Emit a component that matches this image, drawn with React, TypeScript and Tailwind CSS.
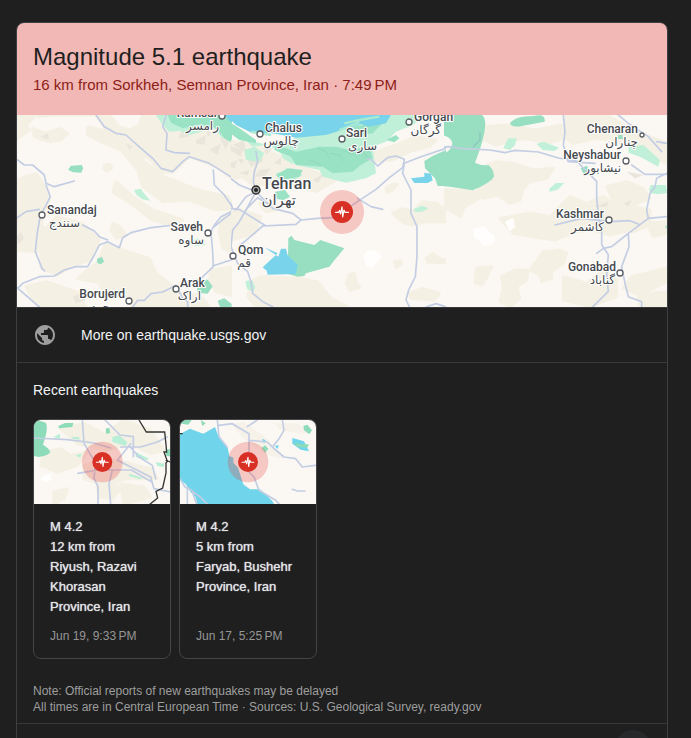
import type { ReactNode } from "react";

type City = {
  name: string;
  local: string;
  x: number;
  y: number;
  localX: number;
  dot: [number, number];
  anchor?: "start" | "end";
  big?: boolean;
};

const cities: City[] = [
  { name: "Ramsar", local: "رامسر", x: 201, y: 2, localX: 202, dot: [205, 1], anchor: "end" },
  { name: "Sanandaj", local: "سنندج", x: 30, y: 99, localX: 63, dot: [25, 100] },
  { name: "Saveh", local: "ساوه", x: 186, y: 116, localX: 187, dot: [191, 118], anchor: "end" },
  { name: "Arak", local: "اراک", x: 163, y: 172, localX: 184, dot: [159, 174] },
  { name: "Borujerd", local: "بروجرد", x: 108, y: 183, localX: 109, dot: [112, 186], anchor: "end" },
  { name: "Chalus", local: "چالوس", x: 248, y: 17, localX: 282, dot: [243, 19] },
  { name: "Sari", local: "ساری", x: 329, y: 22, localX: 360, dot: [325, 24] },
  { name: "Gorgan", local: "گرگان", x: 397, y: 6, localX: 424, dot: [392, 7] },
  { name: "Tehran", local: "تهران", x: 245, y: 74, localX: 279, dot: [239, 75], big: true },
  { name: "Qom", local: "قم", x: 221, y: 139, localX: 234, dot: [216, 141] },
  { name: "Chenaran", local: "چناران", x: 621, y: 18, localX: 621, dot: [625, 20], anchor: "end" },
  { name: "Neyshabur", local: "نیشابور", x: 604, y: 44, localX: 604, dot: [609, 46], anchor: "end" },
  { name: "Kashmar", local: "کاشمر", x: 587, y: 103, localX: 587, dot: [592, 105], anchor: "end" },
  { name: "Gonabad", local: "گناباد", x: 599, y: 156, localX: 598, dot: [603, 158], anchor: "end" },
];

function QuakeMark({ x, y, halo, core }: { x: number; y: number; halo: number; core: number }) {
  return (
    <g transform={`translate(${x} ${y})`}>
      <circle r={halo} fill="#e53935" fillOpacity="0.25" />
      <circle r={core} fill="#d93025" />
      <path
        transform={`scale(${core / 11})`}
        d="M-6.5 .3h3L-2.5-1.5-1.5 2 0-5.2.7 5 2-2 3 .3h3.5"
        fill="none"
        stroke="#fff"
        strokeWidth="1.2"
        strokeLinejoin="round"
        strokeLinecap="round"
      />
    </g>
  );
}

function Roads({ children }: { children: ReactNode }) {
  return (
    <g fill="none" stroke="#c3cde3" strokeWidth="5" strokeLinejoin="round" strokeLinecap="round">
      {children}
    </g>
  );
}

function Terrain({ children }: { children: ReactNode }) {
  return (
    <g fill="#f4f0e4" stroke="#f4f0e4" strokeWidth="9" strokeLinejoin="round">
      {children}
    </g>
  );
}

function WestTiles() {
  return (
    <g transform="translate(-1 -5) scale(.33333)">
      <Terrain>
        <path d="M0 15H60L30 45 40 60 0 90Z" />
        <path d="M68 20L110 15H240L270 60 330 85 360 125 405 150 430 185 470 187 520 140 600 170 660 215V15H420L380 15 370 45 340 60 310 50 280 15H68Z" />
        <path d="M50 55l40 15 40-15 25 15-20 20-35 5-45-15Z" />
        <path d="M215 50l60 15 60 30 50 60 60 45 100 40 90 20 25 35-60 5-80-30-80 5-60-45-15-50-50-60-60-25-40-20Z" />
        <path d="M300 215l50 45 60 40 90 30-20 20-70-20-60-45-60-40Z" />
        <path d="M265 165l15-3 8 12-15 8-10-6Z" />
        <path d="M0 210l60-20 20 30 20 50-20 40-5 60-10 55-65-5Z" />
        <path d="M120 320l80 20 50 50-25 60-60 20-40 25-50-20 0-50-25-20 15-60 25 10Z" />
        <path d="M290 340l25 12 15 25-30 8-15-25Z" />
        <path d="M270 400l80 30 50 15 20 45 60 45 10 56H350l-15-30-60-5-30-40-60-10 60-50Z" />
        <path d="M30 530l60-15 90 30 30 45H70l-30-40Z" />
        <path d="M585 480l75-10V560l-60-15-20-30Z" />
        <path d="M480 550l70 5 30 36H480Z" />
        <path d="M620 320l40-20V430l-40-15-10-50Z" />
      </Terrain>
      <g fill="#eae6dc">
        <path d="M490 70l25-10 5 20-30 5ZM540 90l30-15-5 30-25-5ZM580 120l35-20-10 35ZM610 80l30 10-10 30ZM570 60l20 10-15 10Z" />
        <path d="M0 380l15-15 10 20-20 20ZM170 560l25-10 15 20-30 10ZM75 80l20-10 5 20ZM330 100l20 10-10 10Z" />
      </g>
      <path d="M420 15H660V105L615 80 595 55 520 75 490 62 460 65 440 45Z" fill="#c1f0d9" />
      <path d="M455 15H660V105L625 85 605 60 590 50 545 45 500 55 465 38Z" fill="#99e2c4" />
      <path d="M625 15H660V42L640 32Z" fill="#79d3ea" />
      <g fill="#97dfc0">
        <path d="M165 167l33-2 3 10-5 13-25-1-15-8Z" />
        <path d="M243 447l15-7 6 15-10 8-10-4Z" />
        <path d="M605 572l20-7 23 18-5 8H612Z" />
        <path d="M540 507l35 2 15 20-15 22-30-3Z" />
      </g>
      <path d="M354 240l20-4 15 20 14 16-24-4-18-14ZM545 385l25 20-30 3-25-10Z" fill="#c1f0d9" />
      <Roads>
        <path d="M240 15l25 35 35 20 30 5 45 40 35 30 25 30 35 10 30-30 20-15 60 20 40 25 40 25" />
        <path d="M450 15l-10 35 13 20-3 50 25 8 45 2" />
        <path d="M5 150l20 15 25 0 35 30 5 25 25 10 60-17M90 225l13 35-15 30-15 25-10 60-5 50 20 50 8 8M0 325l30-20 40-7" />
        <path d="M5 535l15-15 50-20 45-2 30-18 35-10 35 0 20-35 15-30 25-10 35 18 10-30 25-15 60-15 70-8 55 0M0 530l70 61M200 345l35 18 15 17 25 10" />
        <path d="M592 180l3 45 30 30 30 45-40 20-20 25-10 20 5 60 2 45-40 38M590 468l60-20M595 350l30-25 35-25M660 350l-8 15v60" />
        <path d="M350 591l15-20 20 0 20-20 35-5 20-10 20-10M490 545l10 20 15 10v16" />
      </Roads>
    </g>
  );
}

function CentralTiles() {
  return (
    <g transform="translate(209 -5) scale(.33333)">
      <Terrain>
        <path d="M0 90L100 110 250 180 330 210 270 245 180 220 80 225 50 200 0 210Z" />
        <path d="M0 310l45-10 60 20-20 50-70 20-15-20Z" />
        <path d="M75 515l30-15 110 5 60 10 40 50 50 26H90l-25-30Z" />
        <path d="M360 520l10-25 15-5 5 25 12 18-30 8Z" />
        <path d="M500 310l30-15 30 10 30-30 40 5 30 20v35l-60 0-40 10-25-5Z" />
        <path d="M505 455l20-3 0 12-15 8ZM600 445l20-15 20 15 20 5v8l-55-2ZM550 550l40-15 50 15-15 20-70-5Z" />
        <path d="M410 140l100-35 60-25 60 10-20 20-60 15-50 25-80 5Z" />
        <path d="M480 235l20-12 15 0-15 16-15 8ZM100 280l40 5 10 15-30 5Z" />
      </Terrain>
      <g fill="#e9e5db">
        <path d="M0 85l20 25 30 10-5 20-35-20ZM20 105l40 20-5-35ZM65 150l45-25 0 30-35 15ZM110 105l30 10-20 20ZM5 165l30-15-10 25ZM100 180l35-5-20 25-30 0ZM145 160l20-20 0 25ZM260 210l35-20-20 30ZM35 145l20 5-10 12ZM40 190l30-10-5 15Z" />
      </g>
      <g fill="#c1f0d9">
        <path d="M0 50L40 75 80 110 170 100 260 60 380 35 500 15H600L560 45 510 65 480 95 440 110 450 190 420 205 360 218 290 200 280 180 210 165 130 105 60 90 0 65Z" />
        <path d="M55 120l30-10 30 20-15 25-40-5ZM165 130l50-10 30 20-10 25-40-5-25-15ZM150 190l50-15 30 20-25 15-45 0Z" />
      </g>
      <g fill="#99e2c4">
        <path d="M0 30L40 55 90 90 90 100 40 90 0 60ZM150 105l60 20 70-15 50 0 40 10 60-10 10 35-35 20-25 20-60 5-30-20-80-5-15-25-50-20ZM150 195l35-20 45 5-10 20-55 10Z" />
        <path d="M380 50l60-10 30 0-30 30-40 5ZM480 90l30-15 10 10-15 12ZM147 245l30-5 15 20-20 10-20-3Z" />
      </g>
      <path d="M0 15H495L480 40 430 50 405 42 300 75 210 83 140 70 80 70 30 45Z" fill="#79d3ea" />
      <path d="M355 40l45-10 60-10M340 60l60-23M75 65l60 10" fill="none" stroke="#a9ead0" strokeWidth="7" />
      <g fill="#97dfc0">
        <path d="M595 153l25-15 40-18V228H635l-8-23-30-30Z" />
        <path d="M187 385l10-8 8 13 60 15 18-15 72 25-25 30-20 25-70 20-5 8-20 2-30-8Z" />
        <path d="M0 570l20 21H0Z" />
      </g>
      <path d="M115 412l42 28 8-24 15 0 5 20 30 28-5 28-85 2-3-12-12-10 45-42Z" fill="#79d3ea" />
      <path d="M555 205l40-5 0-12 20 3 5 20-15 8-40 0Z" fill="#79d3ea" />
      <path d="M563 297l25-10 20 8-20 10-20 2ZM58 513l20-3 10 20-5 15-20-8Z" fill="#c1f0d9" />
      <path d="M412 435l20-17 30 10 5 15-17 15-10 18-20-10Z" fill="#fffefc" />
      <g fill="none" stroke="#90d9bb" strokeWidth="3">
        <path d="M275 115l25 10 10 20M310 130l30 5 15 20M350 120l35 15M250 150l35 15M400 120l30 25" />
      </g>
      <Roads>
        <path d="M0 195l40 30 50 20-30 55-20 35-20 25-5 50 20 50 30 25 10 30 5 35 30 25 30 15" />
        <path d="M90 245l-8-30 3-30 10-30-5-30M90 245l50 50 60 15 25 20-15 13-100 5-40 35-30 25M0 295l40 3 80 50M225 330l50-5 50-2 65-45 60-40 40-35 40-30 5-25-25-10-25 5-30 25-20-20-10 0M395 265l40 25 35 8" />
        <path d="M535 160l50-20 75-25M535 160l-5 30 25 50 0 70 18 40 0 90-5 60-20 40-8 30 10 20M600 591l30-10 30 10M0 245l20 50M0 450l20-10M60 298l35-35 30 18M30 300l30-40 30-15" />
      </Roads>
    </g>
  );
}

function EastTiles() {
  return (
    <g transform="translate(423 -5) scale(.33333)">
      <Terrain>
        <path d="M135 50l60-5 90 15 80-15 20 35-60 20-70-15-90 20-40-20ZM380 15H500L580 60 680 100v60l-60-30-70-30-80-15-70 15-30-20Z" />
        <path d="M140 165l30-10 50 5 60 20 60-5-20 30-50 10-20 20-10 35-30 10-40-25-40 10-20-20 20-30Z" />
        <path d="M15 240l80 0 30 20-50 30-15 30-30-20-25-5ZM180 325l90-15 60 10 60-60 50 20 50-20 30 20 110 20 0 45-50 20-90-10-120 15-90 10-60-10Z" />
        <path d="M270 340l60 0 80 10-15 20-50 20-70-10-30-20ZM310 425l50-5 20 10-10 30-35 25 0 20-30 10-5-20-30-15ZM110 475l45-5-15 32-15 22-20-5ZM185 500l40-20 40 0-5 30-30 20 10 35-30 25-30-15 10-40ZM370 500l70 20 50-40 40 30 0 50-80 30-80-20ZM575 500l105-25v40l-80 40-50-20ZM595 555l85-10V591H600ZM500 230l60-15 50 20 20 30-50 20-60-10Z" />
        <path d="M620 340l60-5v35l-40 10ZM480 350l80-10 10 20-60 15-40-10Z" />
      </Terrain>
      <path d="M560 185l50 10-25 10ZM465 290l40-15-5 15ZM550 280l25-10-10 20Z" fill="#e9e5da" />
      <g fill="#97dfc0">
        <path d="M5 15H125Q136 20 136 45 134 85 105 158 125 168 145 165 162 178 162 200 152 218 98 241L30 230-15 227V135L15 130Q35 120 37 100 33 80 5 75L-5 50Z" />
        <path d="M210 40Q225 18 280 18 318 10 314 35L250 47Q215 55 210 40ZM422 175l18-8 10 15-20 8ZM535 75l12 0 2 12h-15ZM675 350l5-5v12Z" />
      </g>
      <g fill="#c1f0d9">
        <path d="M190 115l15-30 25 0-5 20-15 15ZM290 102l20-7 48 18-15 10-35-3ZM328 236l20-17 25 0-20 20-25 6ZM565 110l45-5 50 45-5 20-55-30-35-12ZM627 240l5-15 45 0 5 25-30 3-20-3Z" />
      </g>
      <path d="M100 355l35-7 15 20 15 10-5 22-25 10-20-20-15-8ZM195 335l25-12 5 30-17 10Z" fill="#fffefc" />
      <Roads>
        <path d="M0 112l30-2 30 5 90 5 45 8 30-7 70 5 60 18 60 10 5 10 50 50 0 50 5 50 10 50 0 40 20 30-5 60 5 50-55 55" />
        <path d="M370 15l5 50-5 40 15 50 80 5M535 15l30 25 60 40 40 45M650 95l30 5M575 165l40 28 65 0M680 190l-30 15-5 25-15 20-10 50 5 25-20 15-40 30-25 20-25 20-25 5-20 15M345 345l80-20 85 10 60-3 25 10M565 370l2 40-22 60 10 50 10 40 40 15v15M625 325l55-5" />
        <path d="M100 110l20-20v-20" stroke="#8fc9c0" />
      </Roads>
    </g>
  );
}

function MainMap() {
  return (
    <svg
      viewBox="0 0 650 192"
      preserveAspectRatio="xMidYMid slice"
      role="img"
      aria-label="Map of the epicenter"
      className="block h-48 w-full bg-[#fbf8f3]"
    >
      <svg width="215" height="192"><WestTiles /></svg>
      <svg x="214" width="215" height="192" viewBox="214 0 215 192"><CentralTiles /></svg>
      <svg x="427" width="223" height="192" viewBox="427 0 223 192"><EastTiles /></svg>
      <g fontFamily="Roboto, 'DejaVu Sans', sans-serif" stroke="#fff" strokeWidth="2" strokeLinejoin="round" paintOrder="stroke" fill="#45484d">
        {cities.map((c) => (
          <g key={c.name}>
            <text x={c.x} y={c.y} fontSize={c.big ? 16 : 12} fontWeight="500" textAnchor={c.anchor ?? "start"}>
              {c.name}
            </text>
            <text x={c.localX} y={c.y + (c.big ? 16 : 13)} fontSize={c.big ? 15 : 12} textAnchor="end">
              {c.local}
            </text>
          </g>
        ))}
      </g>
      {cities.map((c) => (
        <g key={c.name}>
          <circle
            cx={c.dot[0]}
            cy={c.dot[1]}
            r={c.name === "Chenaran" ? 2 : c.big ? 4 : 3}
            fill={c.big ? "#a5a7aa" : "#fff"}
            stroke={c.big ? "#222" : "#5a5d62"}
            strokeWidth="1.3"
          />
          {c.big && <circle cx={c.dot[0]} cy={c.dot[1]} r="2" fill="#222" />}
        </g>
      ))}
      <QuakeMark x={325} y={97} halo={22} core={11} />
    </svg>
  );
}

function RazaviMap() {
  return (
    <svg viewBox="30 24 408 252" preserveAspectRatio="xMidYMid slice" role="img" aria-label="Map near Riyush" className="block h-[84px] w-full bg-[#fbf8f3]">
      <Terrain>
        <path d="M110 50l70-15 60 30 60-40 80 30 40 60-40 10-60-30-70 20-90-20ZM60 120l50-10 30 20 50-10-30 40-60 20-50-20ZM180 160l60-20 60 10 80 20 20 30-90 0-70 20-60-20ZM220 225l40-15 30 20-25 30-40-5ZM90 240l40-10-10 30-30 16ZM290 215l70 10 20 30-80 21Z" />
      </Terrain>
      <g fill="#8ddbb9">
        <path d="M30 28Q50 24 65 32 75 45 57 98 75 108 79 120 75 130 45 135L30 132ZM103 42l20-9 25 0-3 12-40 4ZM245 50l10-3 4 15-12 4ZM425 112l15 0v22l-14-3Z" />
      </g>
      <path d="M265 75l20-5 25 20-5 12-40-12ZM335 120l40 20-5 5-35-10ZM395 150l25 5v10l-20-3ZM315 185l40 12-5 5-35-10ZM88 75l20-10 0 15ZM140 75l25 0 2 8-20-3ZM155 130l18-5-5 12Z" fill="#b9efd6" />
      <path d="M62 190l18-5v20l-15 5-15-10Z" fill="#fff" />
      <Roads>
        <path d="M175 24l5 70 35 60-5 45 12 25v52M30 78l100 5 80 10 50 15M243 24l45 45 40 5 0 60M290 105l60 0 50-15 30-15M320 95l-40 50 60 30 40 20 10 35 50 10M162 184l60-10 60 0 40 0 60 35M265 175l-10 40 5 61M315 100l30 35 40 25 10 40" />
      </Roads>
      <path d="M345 24l22 36h55l4 38 2 22-8 0 10 28-4 5 0 30-10 45-20 10 5 20-25 20" fill="none" stroke="#343434" strokeWidth="4" />
      <path d="M425 145l14 5" stroke="#343434" strokeWidth="4" />
      <QuakeMark x={235} y={150} halo={61} core={30} />
    </svg>
  );
}

function BushehrMap() {
  return (
    <svg viewBox="468 24 408 252" preserveAspectRatio="xMidYMid slice" role="img" aria-label="Map near Faryab" className="block h-[84px] w-full bg-[#fbf8f3]">
      <path d="M620 35l40-5 70 50 50 60-50-10-70-50ZM750 34h70l40 30-40 0-50-10Z" fill="#f6f2e9" />
      <path d="M468 66l30-16 40 15 35-20 8 22 30 40 5 25 12 5 0 15 14 15 16 50 20 15 30 0 22 20 15 15 5 9H520l-5-20-15-15-15-25-17-12Z" fill="#70d4ea" />
      <path d="M468 24h35l-10 14-20-3ZM838 42l12-4 14 17-8 12-16-12ZM713 108l10-8 10 10-10 12ZM530 24l15 10-10 8Z" fill="#8ddbb9" />
      <path d="M805 78l35 10 15 30-25-5-25-18ZM752 102l12-3-3 12ZM715 80l10 5-5 10Z" fill="#70d4ea" />
      <path d="M810 92l25 5 20 0-5 10-30-2Z" fill="#8ddbb9" />
      <path d="M468 65h8" stroke="#333" strokeWidth="4" />
      <Roads>
        <path d="M580 24l5 50 25 32M585 40l40-5 50 30 0 50-10 55 25 25 15 40 50 30 25 27M675 85l55 5 15 15 20-25 15-25-5-31M745 105l35 30 35 5 20 25 40-5M805 232l15 5 23 0M468 200l15 25 20 10 15 41M490 276v-50l40 30 20 20M700 24l-30 20" />
      </Roads>
      <QuakeMark x={672} y={150} halo={61} core={30} />
    </svg>
  );
}

function QuakeCard({ map, magnitude, place, time }: { map: ReactNode; magnitude: string; place: string; time: string }) {
  return (
    <a href="#" className="flex h-60 w-[138px] flex-col overflow-hidden rounded-lg border border-[#444548]">
      {map}
      <div className="flex flex-1 flex-col justify-between pt-[13px] pr-5 pb-3 pl-4 leading-5">
        <div className="text-[13px] text-[#e3e5e8] [text-shadow:0_0_1px_#e3e5e8]">
          <p>{magnitude}</p>
          <p>{place}</p>
        </div>
        <p className="text-[12px] whitespace-nowrap text-[#969696]">{time}</p>
      </div>
    </a>
  );
}

export default function App() {
  return (
    <div className="h-screen overflow-hidden bg-[#1f1f1f] pt-[22px] pr-[23px] pl-4 font-['Liberation_Sans',Arial,sans-serif]">
      <main className="overflow-hidden rounded-lg border border-[#3c4043]">
        <header className="bg-[#f2b8b5] px-4 pt-[18px] pb-[18px] text-[#1f1f1f]">
          <h1 className="text-[24px] leading-8">Magnitude 5.1 earthquake</h1>
          <p className="text-[15px] leading-6 text-[#8c1d18]">16 km from Sorkheh, Semnan Province, Iran · 7:49{"\u202f"}PM</p>
        </header>
        <MainMap />
        <a href="#" className="flex h-14 items-center gap-6 border-y border-[#37393b] px-4 text-[14px] text-[#f1f3f4]">
          <svg viewBox="0 0 24 24" className="size-6" fill="#9e9e9e" aria-hidden="true">
            <path d="M12 2C6.48 2 2 6.48 2 12s4.48 10 10 10 10-4.48 10-10S17.52 2 12 2zm-1 17.93c-3.95-.49-7-3.85-7-7.93 0-.62.08-1.21.21-1.79L9 15v1c0 1.1.9 2 2 2v1.93zm6.9-2.54c-.26-.81-1-1.39-1.9-1.39h-1v-3c0-.55-.45-1-1-1H8v-2h2c.55 0 1-.45 1-1V7h2c1.1 0 2-.9 2-2v-.41c2.93 1.19 5 4.06 5 7.41 0 2.08-.8 3.97-2.1 5.39z" />
          </svg>
          <span>More on earthquake.usgs.gov</span>
        </a>
        <section className="px-4 pt-[17px] pb-2">
          <h2 className="text-[14px] leading-5 text-[#f1f3f4]">Recent earthquakes</h2>
          <div className="mt-[19px] flex gap-2">
            <QuakeCard map={<RazaviMap />} magnitude="M 4.2" place="12 km from Riyush, Razavi Khorasan Province, Iran" time={"Jun 19, 9:33\u202fPM"} />
            <QuakeCard map={<BushehrMap />} magnitude="M 4.2" place="5 km from Faryab, Bushehr Province, Iran" time={"Jun 17, 5:25\u202fPM"} />
          </div>
          <div className="mt-6 text-[12px] leading-4 text-[#9e9e9e]">
            <p>Note: Official reports of new earthquakes may be delayed</p>
            <p>All times are in Central European Time · Sources: U.S. Geological Survey, ready.gov</p>
          </div>
        </section>
        <footer className="flex justify-end border-t border-[#37393b] px-4 pt-1.5">
          <button type="button" aria-label="More options" className="size-9 rounded-full bg-[#28292a]" />
        </footer>
      </main>
    </div>
  );
}
